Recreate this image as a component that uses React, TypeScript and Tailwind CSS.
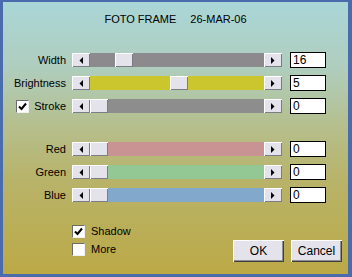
import React from "react";

const bevel =
  "bg-[#e4e3ec] shadow-[inset_1px_1px_0_#ffffff,inset_-1px_-1px_0_#7c7c84]";

function Arrow({ dir }: { dir: "left" | "right" }) {
  return (
    <div className={`flex h-[14px] w-[18px] items-center justify-center ${bevel}`}>
      <svg width="4" height="7" viewBox="0 0 4 7">
        {dir === "left" ? (
          <polygon points="4,0 4,7 0.5,3.5" fill="#000" />
        ) : (
          <polygon points="0,0 0,7 3.5,3.5" fill="#000" />
        )}
      </svg>
    </div>
  );
}

function Slider({ track, thumb }: { track: string; thumb: number }) {
  return (
    <div className="ml-[6px] flex h-[14px] w-[210px]">
      <Arrow dir="left" />
      <div className="relative flex-1" style={{ background: track }}>
        <div className={`absolute top-0 h-[14px] w-[18px] ${bevel}`} style={{ left: thumb }} />
      </div>
      <Arrow dir="right" />
    </div>
  );
}

function Check({ checked }: { checked: boolean }) {
  return (
    <div className="flex h-[13px] w-[13px] items-center justify-center border border-t-[#6c6c6c] border-l-[#6c6c6c] border-b-[#f0f0f0] border-r-[#f0f0f0] bg-white">
      {checked && (
        <svg width="9" height="9" viewBox="0 0 9 9">
          <polyline points="1,4.5 3.5,7 8,1.5" fill="none" stroke="#000" strokeWidth="2" />
        </svg>
      )}
    </div>
  );
}

function Row({
  label,
  value,
  track,
  thumb,
  checkbox,
  className = "",
}: {
  label: string;
  value: string;
  track: string;
  thumb: number;
  checkbox?: boolean;
  className?: string;
}) {
  return (
    <div className={`flex h-4 items-center ${className}`}>
      <div className="flex w-[63px] items-center justify-end">
        {checkbox && (
          <div className="mr-auto ml-[13px]">
            <Check checked />
          </div>
        )}
        <span>{label}</span>
      </div>
      <Slider track={track} thumb={thumb} />
      <div className="ml-2 flex h-4 w-9 items-center border border-black bg-white pl-[2px] text-[12px] leading-none">
        {value}
      </div>
    </div>
  );
}

export default function App() {
  return (
    <div className="h-[277px] w-[352px] bg-[#4a6cad] pt-[2px] pl-[3px] pr-[4px] pb-[3px] font-['Liberation_Sans',Arial,sans-serif] text-[11px] leading-[13px] text-black">
      <div className="flex h-full flex-col bg-[linear-gradient(to_bottom,#aad6d8_0%,#afcdbc_25%,#b5bf8e_45%,#b8b36a_65%,#bba946_100%)] pt-[11px]">
        {/* Title */}
        <div className="flex justify-center gap-[14px]">
          <span>FOTO FRAME</span>
          <span>26-MAR-06</span>
        </div>

        {/* Sliders */}
        <div className="mt-[26px] flex flex-col gap-[7px]">
          <Row label="Width" value="16" track="#8c8a8c" thumb={25} />
          <Row label="Brightness" value="5" track="#cbc52e" thumb={80} />
          <Row label="Stroke" value="0" track="#8e8d8e" thumb={0} checkbox />
          <Row label="Red" value="0" track="#c99393" thumb={0} className="mt-5" />
          <Row label="Green" value="0" track="#93c793" thumb={0} />
          <Row label="Blue" value="0" track="#82a9cb" thumb={0} />
        </div>

        {/* Options and buttons */}
        <div className="flex flex-1 items-start pr-[6px]">
          <div className="ml-[69px] mt-[22px] flex flex-col gap-[5px]">
            <div className="flex items-center gap-[6px]">
              <Check checked />
              <span>Shadow</span>
            </div>
            <div className="flex items-center gap-[6px]">
              <Check checked={false} />
              <span>More</span>
            </div>
          </div>
          <div className="ml-auto mt-[37px] flex gap-[7px] text-[12px]">
            <button className={`h-[22px] w-[51px] ${bevel} shadow-[inset_1px_1px_0_#ffffff,inset_-1px_-1px_0_#404040,inset_-2px_-2px_0_#8c8c94]`}>
              OK
            </button>
            <button className={`h-[22px] w-[51px] ${bevel} shadow-[inset_1px_1px_0_#ffffff,inset_-1px_-1px_0_#404040,inset_-2px_-2px_0_#8c8c94]`}>
              Cancel
            </button>
          </div>
        </div>
      </div>
    </div>
  );
}
